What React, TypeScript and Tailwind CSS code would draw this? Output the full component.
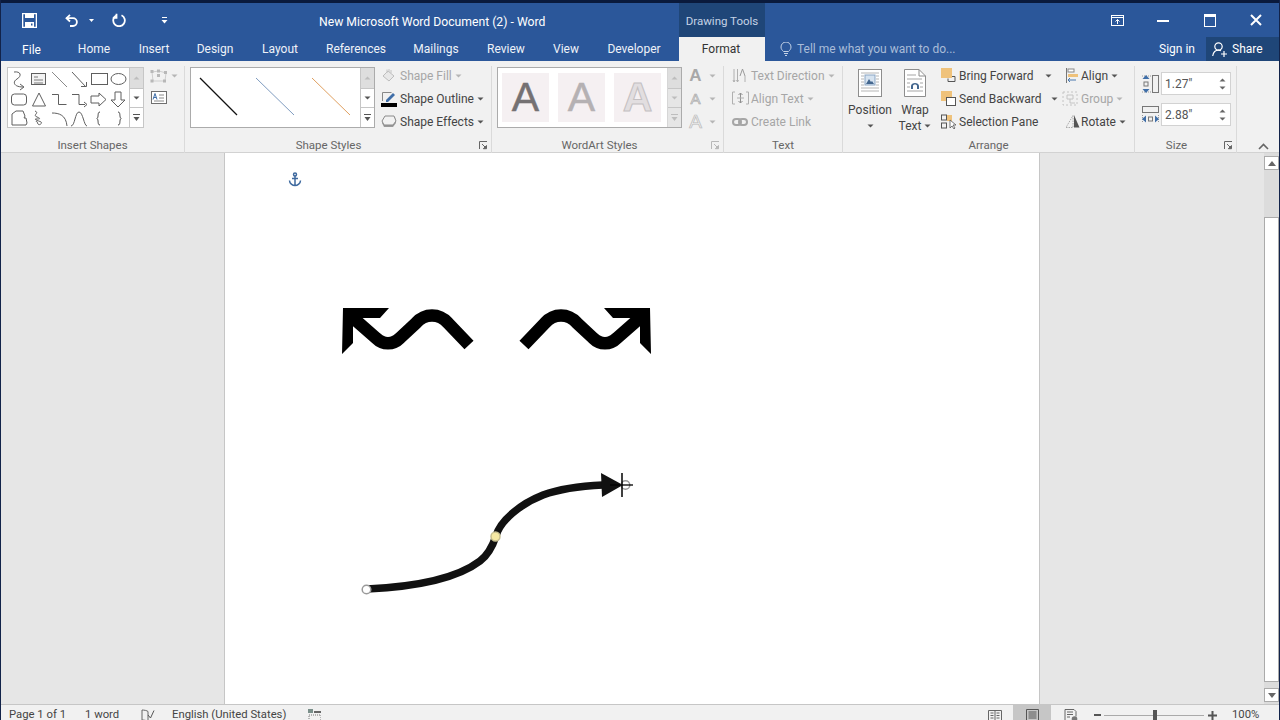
import React from "react";

const Caret = ({ gray }: { gray?: boolean }) => (
  <svg width="7" height="4" viewBox="0 0 7 4" className="shrink-0">
    <path d="M0.5 0.5h6L3.5 3.5z" fill={gray ? "#b5b5b5" : "#555"} />
  </svg>
);

function Launcher({ gray }: { gray?: boolean }) {
  const c = gray ? "#b8b8b8" : "#666";
  return (
    <svg width="9" height="9" viewBox="0 0 9 9" className="shrink-0">
      <path d="M0.5 8V0.5H8" fill="none" stroke={c} />
      <path d="M3 3l4 4M7.5 4.5v3.2H4.3z" stroke={c} fill={c} />
    </svg>
  );
}

function ScrollColumn({ gray }: { gray?: boolean }) {
  const a = gray ? "#bdbdbd" : "#555";
  return (
    <div className={`w-[14px] flex flex-col border-l ${gray ? "border-[#d6d6d6]" : "border-[#c6c6c6]"}`}>
      <div className="h-[21px] bg-[#dedede] flex items-center justify-center border-b border-[#c6c6c6]">
        <svg width="7" height="4" viewBox="0 0 7 4"><path d="M0.5 3.5h6L3.5 0.5z" fill="#bdbdbd" /></svg>
      </div>
      <div className={`h-[19px] flex items-center justify-center border-b border-[#c6c6c6] ${gray ? "bg-[#e6e6e6]" : "bg-white"}`}>
        <svg width="7" height="4" viewBox="0 0 7 4"><path d="M0.5 0.5h6L3.5 3.5z" fill={a} /></svg>
      </div>
      <div className={`flex-1 flex items-center justify-center ${gray ? "bg-[#e6e6e6]" : "bg-white"}`}>
        <svg width="7" height="8" viewBox="0 0 7 8"><path d="M0 0.5h7" stroke={a} /><path d="M0.5 3h6L3.5 7z" fill={a} /></svg>
      </div>
    </div>
  );
}

function ShapeGallery() {
  const s = { fill: "none", stroke: "#5f5f5f", strokeWidth: 1 };
  return (
    <svg width="121" height="59" viewBox="7 67 121 59">
      <g {...s}>
        <path d="M13 71c7-1 8 4 3 7s-3 8 6 8" /><path d="M19 83l4 3-4 3" />
        <rect x="30.500" y="72.500" width="14" height="11" fill="#f3f3f3" /><path d="M33 76h4M33 79h9M33 82h9" stroke="#7a7a7a" />
        <path d="M51 71l15 15" stroke="#8a8a8a" />
        <path d="M71 71l14 15" /><path d="M80 85.500h5.500V81" />
        <rect x="90.500" y="72.500" width="16" height="11" />
        <ellipse cx="117.500" cy="78" rx="7.500" ry="5.500" />
        <rect x="10.500" y="93" width="15" height="11" rx="3" />
        <path d="M38 92l6.500 13h-13z" />
        <path d="M51 93.500h6.500v10h8" />
        <path d="M71 93.500h7v10h6" /><path d="M83 101l3 2.500-3 2.500" />
        <path d="M90 95h8v-3l7 6.500-7 6.500v-3h-8z" />
        <path d="M114 91h6v8h4l-7 7-7-7h4z" />
        <path d="M11 113l4-3h7l2 5-1 2h2l1 5-1 2H11z" />
        <path d="M34 110c5 2-3 4 2 6s2 2-1 2 3 2 5 3-2 4-3 2-1-4-2-2" />
        <path d="M51 112c7 0 14 2 15 13" />
        <path d="M70 125c4 0 4-14 8-14s5 14 8 14" />
        <path d="M99 111c-3 0-1 5-3 6.500 2 1.500 0 6.500 3 6.500" stroke="#444" />
        <path d="M117 111c3 0 1 5 3 6.500-2 1.500 0 6.500-3 6.500" stroke="#444" />
      </g>
    </svg>
  );
}

function StyleLines() {
  return (
    <svg width="169" height="59" viewBox="191 68 169 59">
      <path d="M200 78l37 37" stroke="#111" strokeWidth="1.200" />
      <path d="M256 78l38 37" stroke="#7f9cc0" strokeWidth="1" />
      <path d="M312 78l38 37" stroke="#e0a060" strokeWidth="1" />
    </svg>
  );
}

function IconRow({ icon, label, gray, caret, className = "" }: { icon: React.ReactNode; label: string; gray?: boolean; caret?: boolean; className?: string }) {
  return (
    <div className={`h-[23px] flex items-center whitespace-nowrap ${className}`}>
      <span className="w-[19px] flex items-center shrink-0">{icon}</span>
      <span className={gray ? "text-[#a6a6a6]" : ""}>{label}</span>
      {caret && <span className="ml-[3px]"><Caret gray={gray} /></span>}
    </div>
  );
}

function Group({ label, width, children, launcher, grayLauncher, labelPad = "" }: { label: string; width: string; children: React.ReactNode; launcher?: boolean; grayLauncher?: boolean; labelPad?: string }) {
  return (
    <div className={`${width} shrink-0 h-[87px] flex flex-col border-r border-[#dadada]`}>
      <div className="h-[72px] flex">{children}</div>
      <div className={`h-[14px] flex items-center relative pt-[2px] ${labelPad}`}>
        <span className="flex-1 text-center text-[#666] text-[11.5px] leading-none">{label}</span>
        {launcher && <span className="absolute right-[3px] top-[3px] flex"><Launcher gray={grayLauncher} /></span>}
      </div>
    </div>
  );
}

const SmallA = ({ kind }: { kind: number }) => (
  <span
    className={
      kind === 0
        ? "text-[17px] leading-none font-bold text-[#a8a8a8]"
        : kind === 1
          ? "text-[15px] leading-none text-[#f1f1f1] [-webkit-text-stroke:0.7px_#aaa]"
          : "text-[19px] leading-none text-[#f1f1f1] [-webkit-text-stroke:0.7px_#bbb]"
    }
  >
    A
  </span>
);

function SizeField({ value, icon }: { value: string; icon: React.ReactNode }) {
  return (
    <div className="flex items-center h-[23px]">
      <span className="w-[20px] flex shrink-0">{icon}</span>
      <div className="w-[70px] h-[23px] bg-white border border-[#d2d2d2] flex items-center pl-[3px] pr-[4px] justify-between text-[#555] text-[12px]">
        <span>{value}</span>
        <span className="flex flex-col gap-[4px]">
          <svg width="7" height="4" viewBox="0 0 7 4"><path d="M0.5 3.500h6L3.5 0.5z" fill="#666" /></svg>
          <svg width="7" height="4" viewBox="0 0 7 4"><path d="M0.5 0.5h6L3.5 3.500z" fill="#666" /></svg>
        </span>
      </div>
    </div>
  );
}

function Ribbon() {
  return (
    <div className="h-[92px] bg-[#f1f1f1] border-b border-[#d2d2d2] pt-[5px] flex text-[12px] text-[#444]">
      <Group label="Insert Shapes" width="w-[184px]">
        <div className="ml-[6px] mt-[1px] w-[137px] h-[61px] border border-[#c6c6c6] bg-white flex">
          <ShapeGallery />
          <ScrollColumn />
        </div>
        <div className="ml-[6px] flex flex-col pt-[3px] gap-[8px]">
          <div className="flex items-center gap-[3px]">
            <svg width="18" height="14" viewBox="0 0 18 14">
              <path d="M2 3l7-1 7 2-1 8-12 0z" fill="none" stroke="#cfcfcf" />
              <g fill="#b8b8b8"><rect x="0.5" y="1" width="3" height="3" /><rect x="7" y="0.500" width="3" height="3" /><rect x="14" y="2" width="3" height="3" /><rect x="0.5" y="10.500" width="3" height="3" /><rect x="13" y="10.500" width="3" height="3" /><rect x="7" y="5" width="3" height="3" /></g>
            </svg>
            <Caret gray />
          </div>
          <svg width="16" height="13" viewBox="0 0 16 13" className="ml-[1px]">
            <rect x="0.5" y="0.5" width="15" height="12" fill="#fff" stroke="#6f6f6f" />
            <path d="M2 8.500l2-6 2 6M2.800 6.500h2.400" stroke="#3f6ea8" fill="none" />
            <path d="M8 4h5M8 7h5M3 10h10" stroke="#8a8a8a" />
          </svg>
        </div>
      </Group>

      <Group label="Shape Styles" width="w-[307px]" launcher labelPad="pr-[19px]">
        <div className="ml-[5px] mt-[1px] w-[185px] h-[61px] border border-[#ababab] bg-white flex">
          <StyleLines />
          <ScrollColumn />
        </div>
        <div className="ml-[6px] -mt-[2px] flex flex-col">
          <IconRow
            gray
            caret
            label="Shape Fill"
            icon={
              <svg width="17" height="15" viewBox="0 0 17 15">
                <path d="M2 8l5-5 6 5-5 5z" fill="#e8e8e8" stroke="#bdbdbd" />
                <path d="M6 5V1.500M8 4V1M10 5V2" stroke="#c4c4c4" />
              </svg>
            }
          />
          <IconRow
            caret
            label="Shape Outline"
            icon={
              <svg width="17" height="16" viewBox="0 0 17 16">
                <path d="M1.500 10V1.500h9" fill="none" stroke="#888" />
                <path d="M5 9l7-7 2 2-7 7H5z" fill="#3f6ea8" />
                <rect x="0" y="12" width="16" height="4" fill="#000" />
              </svg>
            }
          />
          <IconRow
            caret
            label="Shape Effects"
            icon={
              <svg width="17" height="15" viewBox="0 0 17 15">
                <path d="M4 3h10l1 6-3 4H3L1 9z" fill="#9a9a9a" />
                <path d="M4 2h9l2 5-3 4H3L1 7z" fill="#f2f2f2" stroke="#8a8a8a" />
              </svg>
            }
          />
        </div>
      </Group>

      <Group label="WordArt Styles" width="w-[232px]" launcher grayLauncher labelPad="pr-[16px]">
        <div className="ml-[5px] mt-[1px] w-[185px] h-[61px] border border-[#ababab] bg-white flex">
          <div className="flex-1 flex items-center gap-[9px] pl-[4px]">
            <div className="w-[47px] h-[49px] bg-[#f5f0f2] flex items-center justify-center font-['Liberation_Sans',sans-serif] text-[41px] leading-none text-[#757173] [-webkit-text-stroke:0.5px_#757173]">A</div>
            <div className="w-[47px] h-[49px] bg-[#f5f0f2] flex items-center justify-center font-['Liberation_Sans',sans-serif] text-[41px] leading-none text-[#b5b1b3] [-webkit-text-stroke:0.5px_#b5b1b3]">A</div>
            <div className="w-[47px] h-[49px] bg-[#f5f0f2] flex items-center justify-center font-['Liberation_Sans',sans-serif] font-bold text-[41px] leading-none text-[#e2dee0] [-webkit-text-stroke:1px_#c4c0c2]">A</div>
          </div>
          <ScrollColumn gray />
        </div>
        <div className="ml-[6px] -mt-[2px] flex flex-col font-['Liberation_Sans',sans-serif]">
          {[0, 1, 2].map((k) => (
            <div key={k} className="h-[23px] flex items-center gap-[6px]">
              <span className="w-[15px] flex justify-center"><SmallA kind={k} /></span>
              <Caret gray />
            </div>
          ))}
        </div>
      </Group>

      <Group label="Text" width="w-[119px]">
        <div className="ml-[8px] -mt-[2px] flex flex-col">
          <IconRow
            gray
            caret
            label="Text Direction"
            icon={
              <svg width="17" height="16" viewBox="0 0 17 16" fill="none" stroke="#b0b0b0">
                <path d="M2 1v13M5.500 1v13M13 8v6M1 12l1 2 1-2M4.500 12l1 2 1-2" />
                <path d="M8 8l2.500-7L13 8" stroke="#9a9a9a" />
              </svg>
            }
          />
          <IconRow
            gray
            caret
            label="Align Text"
            icon={
              <svg width="17" height="15" viewBox="0 0 17 15" fill="none" stroke="#b0b0b0">
                <path d="M3 1H0.5v12H3M14 1h2.500v12H14" />
                <path d="M8.500 2v10M6.500 4l2-2 2 2M6.500 10l2 2 2-2" stroke="#8f8f8f" />
                <path d="M5 7h7" />
              </svg>
            }
          />
          <IconRow
            gray
            label="Create Link"
            icon={
              <svg width="16" height="10" viewBox="0 0 16 10" fill="none" stroke="#a6a6a6" strokeWidth="2">
                <rect x="1" y="2" width="8" height="6" rx="3" />
                <rect x="7" y="2" width="8" height="6" rx="3" />
              </svg>
            }
          />
        </div>
      </Group>

      <Group label="Arrange" width="w-[292px]">
        <div className="w-[54px] flex flex-col items-center pt-[3px]">
          <svg width="24" height="28" viewBox="0 0 24 28">
            <rect x="0.500" y="0.500" width="23" height="27" fill="#fff" stroke="#8d8d8d" />
            <path d="M3 4h18M3 7h3M18 7h3M3 10h3M18 10h3M3 13h3M18 13h3M3 16h3M18 16h3M3 19h18M3 22h18" stroke="#b5b5b5" />
            <rect x="7" y="6" width="10" height="10" fill="#d6e3f0" stroke="#8aa5c4" />
            <path d="M8 15l3-5 2 3 1-1 2 3z" fill="#44678f" />
          </svg>
          <span className="mt-[6px] leading-[14px]">Position</span>
          <span className="mt-[7px]"><Caret /></span>
        </div>
        <div className="w-[36px] flex flex-col items-center pt-[3px]">
          <svg width="22" height="28" viewBox="0 0 22 28">
            <path d="M0.500 0.500H15l6.500 6.500v20.500H0.500z" fill="#fff" stroke="#8d8d8d" />
            <path d="M15 0.500V7h6.500" fill="none" stroke="#8d8d8d" />
            <path d="M3 6h9M3 10h15M3 14h3M16 14h3M3 18h3M16 18h3M3 22h16" stroke="#a5a5a5" />
            <path d="M7 20v-3c0-4 8-4 8 0v3h-2v-3c0-2-4-2-4 0v3z" fill="#44678f" />
          </svg>
          <span className="mt-[6px] leading-[14px]">Wrap</span>
          <span className="flex items-center gap-[3px] leading-[16px] mt-[1px] whitespace-nowrap">Text <Caret /></span>
        </div>
        <div className="ml-[8px] -mt-[2px] flex flex-col w-[124px] whitespace-nowrap">
          <div className="h-[23px] flex items-center">
            <span className="w-[18px] shrink-0 flex">
              <svg width="15" height="15" viewBox="0 0 15 15"><rect x="0" y="0" width="11" height="10" fill="#efc27b" /><path d="M11 8.500h3v5H7v-3" fill="none" stroke="#555" /></svg>
            </span>
            <span className="w-[86px]">Bring Forward</span>
            <Caret />
          </div>
          <div className="h-[23px] flex items-center">
            <span className="w-[18px] shrink-0 flex">
              <svg width="15" height="15" viewBox="0 0 15 15"><rect x="0" y="0" width="11" height="10" fill="#efc27b" /><rect x="5.500" y="6.500" width="9" height="8" fill="#fff" stroke="#555" /></svg>
            </span>
            <span className="w-[92px]">Send Backward</span>
            <Caret />
          </div>
          <div className="h-[23px] flex items-center">
            <span className="w-[18px] shrink-0 flex">
              <svg width="16" height="16" viewBox="0 0 16 16" fill="none">
                <rect x="0.500" y="1" width="5" height="5" stroke="#555" /><rect x="0.500" y="9" width="5" height="5" stroke="#555" />
                <rect x="6" y="1" width="5" height="6" fill="#efc27b" />
                <path d="M9 6v8l2-2 2 3 1-1-2-3h3z" fill="#fff" stroke="#555" strokeWidth="0.8" />
              </svg>
            </span>
            <span>Selection Pane</span>
          </div>
        </div>
        <div className="-mt-[2px] flex flex-col whitespace-nowrap">
          <div className="h-[23px] flex items-center">
            <span className="w-[16px] shrink-0 flex">
              <svg width="14" height="15" viewBox="0 0 14 15"><path d="M1.500 0v15" stroke="#777" /><rect x="3" y="1" width="6" height="3" fill="#fff" stroke="#888" /><rect x="3" y="6" width="10" height="3" fill="#efc27b" /><path d="M3 12h8M3 12l2-2M3 12l2 2" stroke="#4a79ae" fill="none" /></svg>
            </span>
            <span>Align</span><span className="ml-[3px]"><Caret /></span>
          </div>
          <div className="h-[23px] flex items-center text-[#a6a6a6] -ml-[3px]">
            <span className="w-[19px] shrink-0 flex">
              <svg width="16" height="15" viewBox="0 0 16 15" fill="none" stroke="#c4c4c4"><rect x="1" y="1" width="14" height="13" strokeDasharray="2 2" /><path d="M5 4h6v4H5zM8 8v4h5" /></svg>
            </span>
            <span>Group</span><span className="ml-[3px]"><Caret gray /></span>
          </div>
          <div className="h-[23px] flex items-center">
            <span className="w-[16px] shrink-0 flex">
              <svg width="15" height="13" viewBox="0 0 15 13"><path d="M8 0.500v12H1z" fill="none" stroke="#aaa" strokeDasharray="1.500 1" /><path d="M9 0l5.500 12.500H9z" fill="#555" /></svg>
            </span>
            <span>Rotate</span><span className="ml-[3px]"><Caret /></span>
          </div>
        </div>
      </Group>

      <Group label="Size" width="w-[102px]" launcher labelPad="pr-[18px]">
        <div className="ml-[6px] pt-[6px] flex flex-col gap-[8px]">
          <SizeField
            value={'1.27"'}
            icon={
              <svg width="18" height="20" viewBox="0 0 18 20" fill="none">
                <rect x="11.500" y="1.500" width="6" height="17" stroke="#777" />
                <path d="M1 2h9M1 18h9" stroke="#999" strokeDasharray="1 1" />
                <path d="M5 1l3.500 4h-7zM5 19l3.500-4h-7z" fill="#3f6ea8" />
                <rect x="3" y="8" width="4" height="4" stroke="#777" />
              </svg>
            }
          />
          <SizeField
            value={'2.88"'}
            icon={
              <svg width="19" height="19" viewBox="0 0 19 19" fill="none">
                <rect x="1.500" y="1.500" width="16" height="6" stroke="#777" />
                <path d="M1.500 10v8M17.500 10v8" stroke="#999" strokeDasharray="1 1" />
                <path d="M1 14l4-3.500v7zM18 14l-4-3.500v7z" fill="#3f6ea8" />
                <rect x="7.500" y="12" width="4" height="4" stroke="#777" />
              </svg>
            }
          />
        </div>
      </Group>

      <div className="flex-1 relative">
        <svg width="11" height="7" viewBox="0 0 11 7" className="absolute right-[10px] bottom-[2px]">
          <path d="M1 6l4.500-4.500L10 6" fill="none" stroke="#666" strokeWidth="1.600" />
        </svg>
      </div>
    </div>
  );
}

function TitleBar() {
  return (
    <div className="h-[34px] flex items-center text-white relative">
      <div className="w-[678px] flex items-center shrink-0 relative h-full">
        <svg width="15" height="15" viewBox="0 0 15 15" className="ml-[21px]">
          <path d="M0.500 0.500h14v14h-14z" fill="none" stroke="#fff" strokeWidth="1.600" />
          <path d="M3 1h9v4H3z" fill="#fff" /><path d="M3 9h9v5H3z" fill="#fff" /><path d="M9 10.500h1.500v2H9z" fill="#2b579a" />
        </svg>
        <svg width="14" height="13" viewBox="0 0 14 13" className="ml-[28px]" fill="none" stroke="#fff" strokeWidth="1.800">
          <path d="M5 0.800L1.500 4.200 5 7.500" /><path d="M1.500 4.200h6.500a3.900 3.900 0 0 1 0 7.800H5" />
        </svg>
        <svg width="5" height="3" viewBox="0 0 5 3" className="ml-[10px]"><path d="M0 0h5L2.500 3z" fill="#fff" /></svg>
        <svg width="14" height="14" viewBox="0 0 14 14" className="ml-[18px]" fill="none" stroke="#fff" strokeWidth="1.800">
          <path d="M4 2.500a5.800 5.800 0 1 0 5.500-.3" /><path d="M4.500 0.800v4H0.800" />
        </svg>
        <svg width="7" height="7" viewBox="0 0 7 7" className="ml-[35px]"><path d="M1 0.500h5" stroke="#fff" /><path d="M0.500 3h6L3.500 6.500z" fill="#fff" /></svg>
        <span className="absolute left-[318px] top-[11px] text-[12.200px] leading-[17px] whitespace-nowrap">New Microsoft Word Document (2) - Word</span>
      </div>
      <div className="w-[86px] h-full bg-[#1f4678] text-[#c5d3e6] text-[11.5px] pt-[3px] flex items-center justify-center shrink-0">Drawing Tools</div>
      <div className="flex-1" />
      <svg width="13" height="11" viewBox="0 0 13 11" className="mr-[33px]" fill="none" stroke="#fff">
        <rect x="0.500" y="0.500" width="12" height="10" /><path d="M0.500 2.500h12" /><path d="M6.500 9V4.500M4.500 6.500l2-2 2 2" />
      </svg>
      <div className="w-[12px] h-[2px] bg-white mr-[35px] mt-[2px]" />
      <div className="w-[10px] h-[9px] border border-white border-t-[3px] box-content mr-[34px]" />
      <svg width="12" height="12" viewBox="0 0 12 12" className="mr-[17px]"><path d="M1 1l10 10M11 1L1 11" stroke="#fff" strokeWidth="2" /></svg>
    </div>
  );
}

function TabBar() {
  const tabs: [string, string][] = [
    ["Home", "w-[64px]"],
    ["Insert", "w-[56px]"],
    ["Design", "w-[66px]"],
    ["Layout", "w-[64px]"],
    ["References", "w-[88px]"],
    ["Mailings", "w-[72px]"],
    ["Review", "w-[68px]"],
    ["View", "w-[52px]"],
    ["Developer", "w-[84px]"],
  ];
  return (
    <div className="h-[24px] flex text-white text-[12px]">
      <div className="w-[61px] flex items-center justify-center pt-[1px]">File</div>
      {tabs.map(([t, w]) => (
        <div key={t} className={`${w} flex items-center justify-center whitespace-nowrap text-[#eef2f8]`}>{t}</div>
      ))}
      <div className="w-[3px]" />
      <div className="w-[86px] bg-[#f1f1f1] text-[#333] flex items-center justify-center pr-[2px]">Format</div>
      <div className="ml-[15px] flex items-center gap-[5px] text-[#a9bcd8]">
        <svg width="12" height="14" viewBox="0 0 12 14" fill="none" stroke="#c4d2e6">
          <path d="M3.500 9.500C2 8 1 7 1 5a5 5 0 0 1 10 0c0 2-1 3-2.500 4.500z" /><path d="M4 11.500h4M5 13.500h2" />
        </svg>
        <span>Tell me what you want to do...</span>
      </div>
      <div className="flex-1" />
      <div className="flex items-center mr-[11px]">Sign in</div>
      <div className="w-[73px] bg-[#1f4678] flex items-center gap-[5px] pl-[6px]">
        <svg width="15" height="15" viewBox="0 0 15 15" fill="none" stroke="#fff" strokeWidth="1.200">
          <circle cx="6.500" cy="4.500" r="3.700" /><path d="M0.700 14c.6-3.500 2.700-5.800 5.800-5.800 1 0 1.700.2 2.400.6M9 12h6M12 9v6" />
        </svg>
        <span>Share</span>
      </div>
    </div>
  );
}

function Drawing() {
  const wave = (
    <>
      <path d="M22 22L46 43C53 50 63 50 70 43L86 28C95 18 109 18 118 28L139 50" fill="none" stroke="#000" strokeWidth="12.500" />
      <path d="M13 13H59L50 23H23V48L12 59z" fill="#000" />
    </>
  );
  return (
    <svg width="330" height="310" viewBox="0 0 330 310" className="absolute left-[105px] top-[142px]">
      {wave}
      <g transform="translate(333,0) scale(-1,1)">{wave}</g>
      <path d="M37 294C80 292 125 285 150 266C158 260 163 250 166 241C170 226 190 209 213 200C232 193 252 191 273 190" fill="none" stroke="#111" strokeWidth="7.500" />
      <path d="M271 178L293 190L272 202z" fill="#111" />
      <circle cx="36.500" cy="294.500" r="4.300" fill="#fff" stroke="#9a9a9a" strokeWidth="1.500" />
      <circle cx="165.500" cy="241.500" r="4.500" fill="#f6e9a4" stroke="#c8c090" strokeWidth="1.500" />
      <circle cx="295.500" cy="190" r="4.300" fill="none" stroke="#9a9a9a" strokeWidth="1.500" />
      <path d="M292 178v24" stroke="#000" strokeWidth="1.500" />
      <path d="M280 190h23" stroke="#000" strokeWidth="1.300" />
    </svg>
  );
}

function Scrollbar() {
  return (
    <div className="w-[15px] bg-[#dcdcdc] flex flex-col pt-[3px] pb-[2px]">
      <div className="h-[14px] bg-white border border-[#ababab] flex items-center justify-center">
        <svg width="8" height="5" viewBox="0 0 8 5"><path d="M0 5h8L4 0z" fill="#666" /></svg>
      </div>
      <div className="h-[47px]" />
      <div className="flex-1 bg-white border border-[#ababab]" />
      <div className="h-[6px]" />
      <div className="h-[14px] bg-white border border-[#ababab] flex items-center justify-center">
        <svg width="8" height="5" viewBox="0 0 8 5"><path d="M0 0h8L4 5z" fill="#666" /></svg>
      </div>
    </div>
  );
}

function StatusBar() {
  return (
    <div className="h-[16px] bg-[#f1f1f1] border-t border-[#c6c6c6] text-[#444] text-[11.300px] overflow-hidden shrink-0">
      <div className="h-[20px] flex items-center">
        <span className="ml-[8px] w-[76px] whitespace-nowrap">Page 1 of 1</span>
        <span className="w-[56px] whitespace-nowrap">1 word</span>
        <svg width="14" height="13" viewBox="0 0 14 13" className="mr-[17px]" fill="none" stroke="#666">
          <path d="M7 2.500C6 1.500 3 1 1 1v10c2 0 5 .5 6 1.500M7 2.500V12.500" /><path d="M7 6l2.500 3L13 1.500" stroke="#555" />
        </svg>
        <span className="w-[136px] whitespace-nowrap">English (United States)</span>
        <svg width="13" height="12" viewBox="0 0 13 12">
          <rect x="0" y="0" width="5" height="4" fill="#7a8f8a" /><rect x="6" y="2" width="7" height="2" fill="#666" />
          <path d="M1 6h12v6H1z" fill="none" stroke="#777" strokeDasharray="1 1" />
        </svg>
        <div className="flex-1" />
        <svg width="14" height="13" viewBox="0 0 14 13" className="mr-[11px]" fill="none" stroke="#666">
          <path d="M0.500 1.500h13v11h-13zM7 1.500v11M2.500 4h3M2.500 6.500h3M2.500 9h3M8.500 4h3M8.500 6.500h3M8.500 9h3" />
        </svg>
        <div className="w-[38px] h-[20px] bg-[#c6c6c6] flex items-center justify-center">
          <svg width="13" height="12" viewBox="0 0 13 12" fill="none" stroke="#555"><path d="M0.500 0.500h12v11h-12zM2.500 3h8M2.500 5h8M2.500 7h8M2.500 9h8" /></svg>
        </div>
        <svg width="14" height="13" viewBox="0 0 14 13" className="ml-[13px]" fill="none" stroke="#666">
          <path d="M1 0.500h9l2 2v5M1 0.500v11h6M3 3h6M3 5.500h6M3 8h3" /><circle cx="10.500" cy="10" r="2.800" fill="#777" stroke="none" />
        </svg>
        <div className="w-[7px] h-[2px] bg-[#555] ml-[16px]" />
        <div className="w-[100px] h-[1px] bg-[#aaa] mx-[3px] relative">
          <div className="absolute left-[49px] -top-[5px] w-[4px] h-[11px] bg-[#555]" />
        </div>
        <svg width="9" height="9" viewBox="0 0 9 9" className="ml-[1px]"><path d="M4.500 0v9M0 4.500h9" stroke="#555" strokeWidth="2" /></svg>
        <span className="ml-[15px] w-[47px] whitespace-nowrap">100%</span>
      </div>
    </div>
  );
}

export default function App() {
  return (
    <div className="w-[1280px] h-[720px] overflow-hidden flex flex-col bg-[#e6e6e6] font-['Roboto','Open_Sans',sans-serif] border-x border-[#12234a]">
      <div className="h-[3px] bg-[#0a1a3c] shrink-0" />
      <div className="bg-[#2b579a] shrink-0">
        <TitleBar />
        <TabBar />
      </div>
      <Ribbon />
      <div className="flex-1 flex min-h-0 bg-[#e6e6e6]">
        <div className="w-[223px] shrink-0" />
        <div className="w-[816px] shrink-0 bg-white border-x border-[#c6c6c6] relative">
          <svg width="14" height="15" viewBox="0 0 14 15" className="absolute left-[63px] top-[19px]" fill="none" stroke="#3f6a9f" strokeWidth="1.500">
            <circle cx="7" cy="2.500" r="1.500" /><path d="M7 4v9.500M4 6.500h6M1.500 8.500c0 3 3 5 5.500 5s5.500-2 5.500-5" />
          </svg>
          <Drawing />
        </div>
        <div className="flex-1" />
        <Scrollbar />
      </div>
      <StatusBar />
    </div>
  );
}
